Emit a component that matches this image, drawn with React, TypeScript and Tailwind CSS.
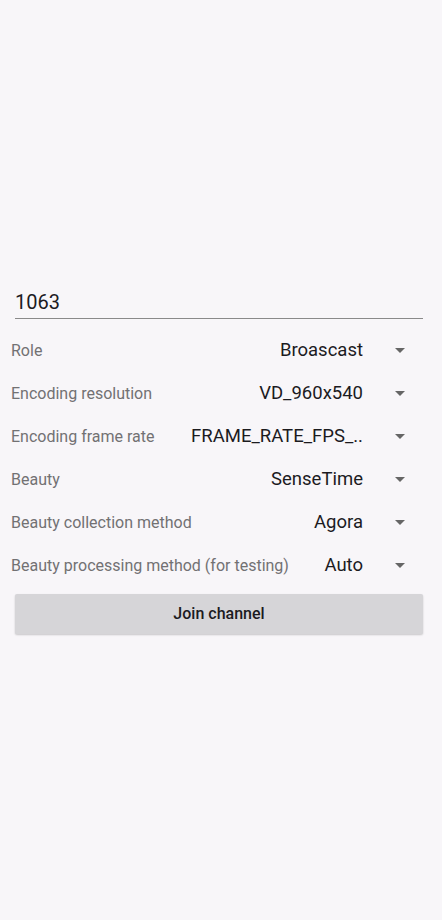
import React from 'react';

const rows = [
  { label: 'Role', value: 'Broascast' },
  { label: 'Encoding resolution', value: 'VD_960x540' },
  { label: 'Encoding frame rate', value: 'FRAME_RATE_FPS_..' },
  { label: 'Beauty', value: 'SenseTime' },
  { label: 'Beauty collection method', value: 'Agora' },
  { label: 'Beauty processing method (for testing)', value: 'Auto' },
];

function Arrow() {
  return (
    <svg width="10" height="5" viewBox="0 0 10 5" className="shrink-0">
      <path d="M0 0 L10 0 L5 5 Z" fill="#666666" />
    </svg>
  );
}

export default function App() {
  return (
    <div className="min-h-[920px] bg-[#f8f6f9] font-['Roboto',sans-serif]">
      {/* Channel input */}
      <div className="ml-[15px] mr-[19px] pt-[288px]">
        <div className="border-b border-[#8a8a8a] pb-[2px] text-[20px] leading-[28px] text-[#1c1b1f]">1063</div>
      </div>

      {/* Spinners */}
      <div className="mt-[10px]">
        {rows.map((row) => (
          <div key={row.label} className="flex h-[43px] items-center pl-[11px] pr-[19px]">
            <div className="shrink-0 whitespace-nowrap text-[16px] text-[#727173]">{row.label}</div>
            <div className="flex min-w-0 flex-1 items-center">
              <div className="flex min-w-0 flex-1 justify-end whitespace-nowrap text-[18.5px] text-[#1c1b1f]">
                <span>{row.value}</span>
              </div>
              <div className="ml-[32px] mr-[18px]">
                <Arrow />
              </div>
            </div>
          </div>
        ))}
      </div>

      {/* Join button */}
      <div className="ml-[15px] mr-[19px] mt-[7px]">
        <button className="flex h-[40px] w-full items-center justify-center rounded-[2px] bg-[#d6d5d8] text-[16px] font-medium text-[#1c1b1f] shadow-[0_1px_2px_rgba(0,0,0,0.2)]">
          Join channel
        </button>
      </div>
    </div>
  );
}
